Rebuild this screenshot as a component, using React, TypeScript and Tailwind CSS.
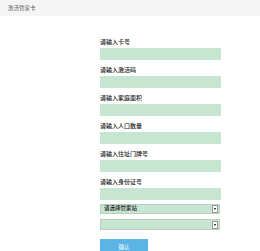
import React from 'react';

const fields = ['请输入卡号', '请输入激活码', '请输入家庭面积', '请输入人口数量', '请输入住址门牌号', '请输入身份证号'];

function SelectBox({ text }: { text?: string }) {
  return (
    <div className="flex h-full w-full items-center justify-between border border-[#b9cfc0] bg-[#c6e6d2] pl-[3px]">
      <span className="text-[5.5px] font-medium leading-none text-[#222]">{text}</span>
      <div className="mr-[1px] flex h-[8px] w-[6px] items-center justify-center border border-[#999] bg-white">
        <div className="h-0 w-0 border-x-[1.5px] border-t-[2px] border-x-transparent border-t-black" />
      </div>
    </div>
  );
}

export default function App() {
  return (
    <div className="h-[251px] w-[260px] overflow-hidden bg-white" style={{ fontFamily: '"Noto Sans CJK SC", sans-serif' }}>
      <div className="h-[16px] bg-[#f5f5f5] pl-[8px] pt-[5px] text-[5.5px] leading-[7px] text-[#555]">激活管家卡</div>

      <div className="ml-[100px] w-[121px] pt-[22px]">
        {fields.map((f) => (
          <div key={f} className="mb-[6px]">
            <div className="mb-[3px] h-[7px] text-[6px] font-medium leading-[7px] text-[#222]">{f}</div>
            <div className="h-[12px] bg-[#c6e6d2]" />
          </div>
        ))}

        <div className="-mt-[2px] h-[10px] w-[120px]">
          <SelectBox text="请选择管家站" />
        </div>
        <div className="mt-[5px] h-[11px] w-[120px]">
          <SelectBox />
        </div>

        <div className="mt-[9px] flex h-[16px] w-[48px] items-center justify-center bg-[#5ab4e6] text-[5.5px] text-white">确认</div>
      </div>
    </div>
  );
}
